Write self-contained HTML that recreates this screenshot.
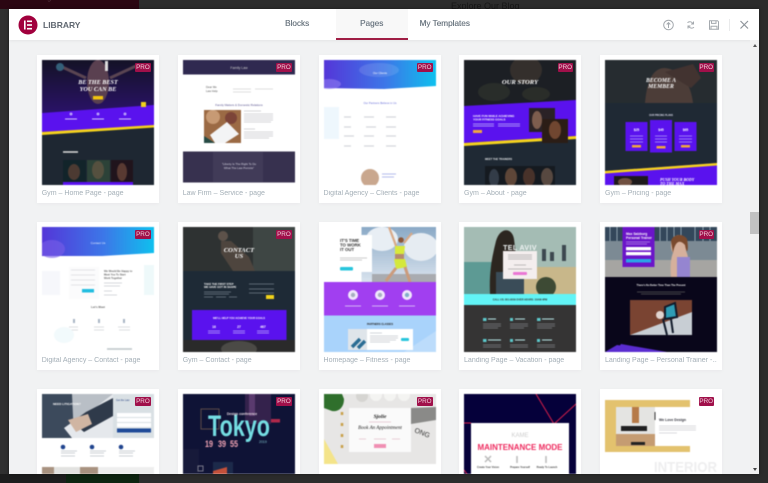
<!DOCTYPE html>
<html><head><meta charset="utf-8"><style>
html,body{margin:0;padding:0;width:768px;height:483px;overflow:hidden;background:#2c2c2c;font-family:"Liberation Sans",sans-serif}
.a{position:absolute}
#modal{position:absolute;left:8.5px;top:8.5px;width:750.5px;height:465.5px;background:#f1f2f3;overflow:hidden;box-shadow:0 0 4px rgba(0,0,0,.4)}
.card{position:absolute;width:122px;height:148px;background:#fff;box-shadow:0 1px 4px rgba(0,0,0,.04);overflow:hidden}
.card svg.t{position:absolute;left:5px;top:5px;width:112px;height:125px;filter:blur(.45px);display:block}
.r3{height:85.5px}
.card.r3 svg.t{height:80.5px}
.card .p{position:absolute;left:98.5px;top:8px;width:15.5px;height:9px;background:#a0104a;color:#f0cfdc;font-size:6.3px;line-height:9px;text-align:center;border-radius:1px;filter:blur(.25px)}
.card .l{position:absolute;left:5px;top:134px;font-size:7.05px;line-height:10px;color:#a4afb7;white-space:nowrap;width:112px;overflow:hidden;filter:blur(.2px)}
.tab{position:absolute;top:9px;font-size:8.2px;line-height:12px;color:#6d7882;text-shadow:.2px 0 0 #6d7882;white-space:nowrap;filter:blur(.2px)}
</style></head><body>
<div class="a" style="left:0;top:0;width:139px;height:9px;background:#2b0612;overflow:hidden"><div style="margin:-6px 0 0 8px;font-size:7px;line-height:10px;color:#5a3a44">Start Tracking</div></div>
<div class="a" style="left:0;top:474px;width:139px;height:9px;background:#1d1d1d"></div>
<div class="a" style="left:66px;top:474px;width:73px;height:9px;background:#0d2410"></div>
<div class="a" style="left:0;top:9px;width:8px;height:465px;background:#303030"></div>
<div class="a" style="left:451px;top:0;font-size:9px;line-height:12px;color:#171717">Explore Our Blog</div>
<div id="modal">
<div class="a" style="left:0;top:0;height:31.5px;background:#fff;box-shadow:0 1px 3px rgba(0,0,0,.06);width:100%"></div>
<svg class="a" style="left:9px;top:6.5px" width="20" height="20" viewBox="0 0 20 20"><circle cx="10" cy="10" r="9.5" fill="#a1003d"/><rect x="6" y="5.5" width="1.6" height="9" fill="#fff"/><rect x="9" y="5.5" width="5" height="1.6" fill="#fff"/><rect x="9" y="9.2" width="5" height="1.6" fill="#fff"/><rect x="9" y="12.9" width="5" height="1.6" fill="#fff"/></svg>
<div class="a" style="left:34.5px;top:10px;font-size:8.5px;line-height:12px;font-weight:bold;color:#5f6770">LIBRARY</div>
<div class="tab" style="left:276.5px">Blocks</div>
<div class="a" style="left:327px;top:0;width:72px;height:31.5px;background:#f8f8f8"></div>
<div class="a" style="left:327px;top:29.5px;width:72px;height:2px;background:#a01e45"></div>
<div class="tab" style="left:351.5px">Pages</div>
<div class="tab" style="left:411px">My Templates</div>
<svg class="a" style="left:650px;top:8px" width="92" height="18" viewBox="0 0 92 18" fill="none" stroke="#a4a9ae" stroke-width="1">
<circle cx="9.5" cy="8" r="4.8"/><path d="M9.5 11V6M7.7 7.5L9.5 5.6 11.3 7.5"/>
<path d="M28.5 5.6A3.4 3.4 0 0 1 34 7M35 10.2A3.4 3.4 0 0 1 29.5 9M34.5 4.5V7H32M29 11.5V9H31.5"/>
<path d="M50.5 3.7H58.5L59.5 4.7V12.2H50.5ZM52.5 3.7V6.4H57V3.7M52 12V9.2H58V12"/>
<path d="M70.5 2V14" stroke="#e9eaeb"/>
<path d="M81.5 4L89 11.5M89 4L81.5 11.5" stroke="#8f959b" stroke-width="1.2"/>
</svg>
<div class="a" style="left:741.5px;top:31.5px;width:9px;height:434px;background:#f1f1f1"></div>
<div class="a" style="left:741.5px;top:203px;width:9px;height:22px;background:#c1c1c1"></div>
<div class="a" style="left:744px;top:35px;width:0;height:0;border:2px solid transparent;border-bottom:3px solid #555;border-top:0"></div>
<div class="a" style="left:744px;top:459.5px;width:0;height:0;border:2px solid transparent;border-top:3px solid #444;border-bottom:0"></div>

<!-- ROW 1 -->
<div class="card" style="left:28.2px;top:46.5px"><svg class="t" viewBox="0 0 112 125">
<defs><linearGradient id="g1" x1="0" y1="0" x2="0" y2="1"><stop offset="0" stop-color="#141226"/><stop offset="1" stop-color="#2a1268"/></linearGradient></defs>
<rect width="112" height="125" fill="#1e2732"/><path d="M0 0H112V46L0 53Z" fill="url(#g1)"/>
<ellipse cx="56" cy="22" rx="11" ry="22" fill="#5a4050"/><path d="M18 6L44 18M94 6L68 18" stroke="#5a4552" stroke-width="3"/><circle cx="18" cy="7" r="4" fill="#34607a"/><rect x="63" y="1" width="3" height="10" fill="#ddd"/>
<text x="56" y="24" font-family="Liberation Serif" font-size="6.2" font-weight="bold" font-style="italic" fill="#fff" text-anchor="middle">BE THE BEST</text>
<text x="56" y="31" font-family="Liberation Serif" font-size="6.2" font-weight="bold" font-style="italic" fill="#fff" text-anchor="middle">YOU CAN BE</text>
<rect x="51" y="36" width="10" height="3.5" fill="#f1c40f"/>
<path d="M0 53L112 45V66L0 72Z" fill="#5a12ee"/><rect x="99" y="42" width="5" height="5" fill="#f1d21a"/>
<path d="M0 72L112 65V67.5L0 75Z" fill="#f4d21e"/>
<circle cx="29" cy="54" r="1.5" fill="#b9a0fa"/><circle cx="56" cy="54" r="1.5" fill="#b9a0fa"/><circle cx="83" cy="54" r="1.5" fill="#b9a0fa"/>
<path d="M23 59H35M50 59H62M77 59H89" stroke="#d3c5fb"/>
<path d="M21 92H36" stroke="#ddd" stroke-width="1.5"/>
<rect x="21" y="100" width="23" height="25" fill="#12242a"/><rect x="45" y="100" width="23" height="25" fill="#2c4238"/><rect x="69" y="100" width="22" height="25" fill="#20141c"/>
<ellipse cx="32" cy="112" rx="6" ry="8" fill="#4c3a32"/><ellipse cx="56" cy="110" rx="6" ry="9" fill="#55503f"/><ellipse cx="80" cy="112" rx="5" ry="9" fill="#593a32"/>
<rect x="21" y="122" width="70" height="3" fill="#5a12ee"/></svg><div class="p">PRO</div><div class="l">Gym – Home Page - page</div></div>

<div class="card" style="left:169.2px;top:46.5px"><svg class="t" viewBox="0 0 112 125">
<rect width="112" height="125" fill="#fff"/><rect width="112" height="14.5" fill="#2f2950"/>
<text x="56" y="9" font-size="3.4" fill="#ccc" text-anchor="middle">Family Law</text>
<text x="23" y="28" font-size="2.8" fill="#555">Dear Me</text><text x="23" y="32" font-size="2.8" fill="#555">Law Help</text>
<path d="M50 29H68M72 29H90M50 32H68" stroke="#ddd" stroke-width="1"/>
<text x="56" y="46" font-size="2.9" fill="#5a5590" text-anchor="middle">Family Matters &amp; Domestic Relations</text>
<rect x="21" y="50" width="37" height="33" fill="#9b6a44"/><circle cx="30" cy="57" r="7" fill="#c79a74"/><circle cx="48" cy="58" r="6" fill="#7c4438"/><path d="M27 75L44 62L56 74L42 83H32Z" fill="#f3f4f5"/><path d="M21 76L32 83H21Z" fill="#264a44"/>
<path d="M61 51H78M61 54H90M61 56H90M61 58H90M61 60H90M61 62H88M61 69H72M61 72H90M61 74H90M61 76H90M61 78H86" stroke="#d4d4d8" stroke-width=".9"/>
<rect y="91.5" width="112" height="31" fill="#37314f"/><rect x="30" y="92" width="50" height="30" fill="#413b58"/>
<text x="56" y="105" font-size="2.9" fill="#d8d6e4" text-anchor="middle">"Liberty Is The Right To Do</text><text x="56" y="109" font-size="2.9" fill="#d8d6e4" text-anchor="middle">What The Law Permits"</text></svg><div class="p">PRO</div><div class="l">Law Firm – Service - page</div></div>

<div class="card" style="left:310px;top:46.5px"><svg class="t" viewBox="0 0 112 125">
<defs><linearGradient id="g3" x1="0" y1="0" x2="1" y2="0"><stop offset="0" stop-color="#5436d8"/><stop offset=".55" stop-color="#3c77e8"/><stop offset="1" stop-color="#0fc0ee"/></linearGradient></defs>
<rect width="112" height="125" fill="#fff"/><path d="M0 0H112V26L60 29L0 28Z" fill="url(#g3)"/><ellipse cx="55" cy="10" rx="20" ry="7" fill="#fff" opacity=".12"/><ellipse cx="5" cy="24" rx="12" ry="5" fill="#8f7cf0" opacity=".6"/>
<text x="56" y="14" font-size="2.8" fill="#fff" text-anchor="middle">Our Clients</text>
<text x="56" y="44" font-size="2.8" fill="#6a70d8" text-anchor="middle">Our Partners Believe in Us</text>
<rect x="0" y="47" width="15" height="32" fill="#eef7fd"/><path d="M20 57H27M40 57H50M62 57H72M20 67H27M42 67H52M62 67H72M20 76H30M40 76H50M62 76H72M20 86H27M40 86H50M62 86H72" stroke="#d5d7db" stroke-width="1.2"/>
<circle cx="46" cy="118" r="9" fill="#c9a78e"/><path d="M58 114H72M58 117H70" stroke="#b4bbea"/></svg><div class="p">PRO</div><div class="l">Digital Agency – Clients - page</div></div>

<div class="card" style="left:450.5px;top:46.5px"><svg class="t" viewBox="0 0 112 125">
<rect width="112" height="125" fill="#1f2934"/><path d="M0 0H112V40L0 46Z" fill="#1c1f24"/><ellipse cx="62" cy="10" rx="16" ry="14" fill="#342f2c"/><ellipse cx="30" cy="32" rx="16" ry="9" fill="#292d2a"/><ellipse cx="72" cy="34" rx="14" ry="7" fill="#2a2d29"/>
<text x="56" y="24" font-family="Liberation Serif" font-size="6.6" font-weight="bold" font-style="italic" fill="#fff" text-anchor="middle">OUR STORY</text>
<path d="M0 46L112 40V76L0 83Z" fill="#5a12ee"/><path d="M0 83L112 76V79L0 86Z" fill="#f4d21e"/>
<text x="9" y="57" font-size="2.9" font-weight="bold" fill="#fff">HAVE FUN WHILE ACHIEVING</text><text x="9" y="60.5" font-size="2.9" font-weight="bold" fill="#fff">YOUR FITNESS GOALS</text>
<path d="M9 64H30M34 64H56M9 66H30M34 66H56" stroke="#a88cf8" stroke-width=".9"/><rect x="9" y="70" width="9" height="3" fill="#f0a740"/>
<rect x="65" y="48" width="26" height="24" fill="#2a2226"/><rect x="78" y="59" width="26" height="24" fill="#2b1d16"/><ellipse cx="73" cy="60" rx="5" ry="9" fill="#7d5d4e"/><ellipse cx="91" cy="70" rx="6" ry="9" fill="#704630"/>
<text x="21" y="100" font-size="2.6" font-weight="bold" fill="#e4e6e8">MEET THE TRAINERS</text>
<rect x="21" y="106" width="70" height="19" fill="#151a20"/><ellipse cx="30" cy="118" rx="5" ry="9" fill="#333c48"/><ellipse cx="47" cy="117" rx="6" ry="9" fill="#5e4638"/><ellipse cx="65" cy="117" rx="6" ry="9" fill="#48322a"/><ellipse cx="83" cy="117" rx="6" ry="9" fill="#574840"/></svg><div class="p">PRO</div><div class="l">Gym – About - page</div></div>

<div class="card" style="left:591.5px;top:46.5px"><svg class="t" viewBox="0 0 112 125">
<rect width="112" height="125" fill="#1f2934"/><rect width="112" height="43" fill="#262c30"/><path d="M40 43C42 20 48 8 60 8C78 10 86 26 88 43Z" fill="#4c3d38"/><path d="M60 12L88 4L96 18L86 28Z" fill="#423330"/>
<text x="56" y="22" font-family="Liberation Serif" font-size="5.8" font-weight="bold" font-style="italic" fill="#fff" text-anchor="middle">BECOME A</text><text x="56" y="28" font-family="Liberation Serif" font-size="5.8" font-weight="bold" font-style="italic" fill="#fff" text-anchor="middle">MEMBER</text>
<text x="56" y="56" font-size="2.3" font-weight="bold" fill="#dde" text-anchor="middle">OUR PRICING PLANS</text>
<rect x="20.5" y="62" width="22" height="29" fill="#5a12ee"/><rect x="45" y="60" width="22" height="32.5" fill="#5a12ee"/><rect x="69.5" y="62" width="22" height="29" fill="#5a12ee"/>
<text x="31.5" y="71" font-size="3.3" font-weight="bold" fill="#fff" text-anchor="middle">$25</text><text x="56" y="71" font-size="3.3" font-weight="bold" fill="#fff" text-anchor="middle">$45</text><text x="80.5" y="71" font-size="3.3" font-weight="bold" fill="#fff" text-anchor="middle">$65</text>
<path d="M25 76H38M25 79H38M25 82H38M50 76H62M50 79H62M50 82H62M74 76H87M74 79H87M74 82H87" stroke="#9d7cf7" stroke-width=".9"/>
<rect x="27" y="85" width="9" height="2.5" fill="#f0a740"/><rect x="51.5" y="86" width="9" height="2.5" fill="#f0a740"/><rect x="76" y="85" width="9" height="2.5" fill="#f0a740"/>
<path d="M0 111L112 103V125H0Z" fill="#5a12ee"/><path d="M0 111L112 103V105.5L0 113.5Z" fill="#f4d21e"/>
<rect x="9" y="116" width="34" height="9" fill="#1e1a1c"/><ellipse cx="20" cy="122" rx="7" ry="4" fill="#705040"/>
<text x="55" y="121" font-family="Liberation Serif" font-size="4" font-weight="bold" font-style="italic" fill="#fff">PUSH YOUR BODY</text><text x="55" y="125" font-family="Liberation Serif" font-size="4" font-weight="bold" font-style="italic" fill="#fff">TO THE MAX</text></svg><div class="p">PRO</div><div class="l">Gym – Pricing - page</div></div>

<!-- ROW 2 -->
<div class="card" style="left:28.2px;top:213.5px;height:147.5px"><svg class="t" viewBox="0 0 112 125">
<rect width="112" height="125" fill="#fff"/><path d="M0 0H112V26L60 29L0 29Z" fill="url(#g3)"/><ellipse cx="10" cy="22" rx="13" ry="9" fill="#7a5fe8" opacity=".6"/>
<text x="56" y="17" font-size="3" fill="#e8f0ff" text-anchor="middle">Contact Us</text>
<rect x="27" y="40" width="30" height="32" fill="#fbfbfc"/><path d="M29 43H53M29 48H53M29 53H53M29 58H53" stroke="#e3e4e8"/><rect x="40" y="62" width="12" height="3.5" fill="#22bde0"/>
<text x="62" y="45" font-size="2.6" font-weight="bold" fill="#666">We Would Be Happy to</text><text x="62" y="48.5" font-size="2.6" font-weight="bold" fill="#666">Meet You To Start</text><text x="62" y="52" font-size="2.6" font-weight="bold" fill="#666">Work Together</text>
<path d="M62 56H80M62 59H78M62 64H70M62 68H75" stroke="#d6d8dc" stroke-width=".9"/><rect x="102" y="38" width="10" height="30" fill="#eef9fa"/><rect x="0" y="44" width="18" height="24" fill="#f6f7fb"/>
<text x="56" y="81" font-size="2.9" font-weight="bold" fill="#666" text-anchor="middle">Let's Meet</text>
<path d="M32 92V96M57 92V96M82 92V96" stroke="#a8b4c4" stroke-width="2"/><path d="M27 100H36M52 100H62M76 100H88M28 103H36M52 103H62M77 103H88" stroke="#dcdde0" stroke-width=".9"/>
<ellipse cx="22" cy="108" rx="10" ry="8" fill="#f2fafc"/><path d="M65 122H90" stroke="#bcc4c8" stroke-width="1.5"/></svg><div class="p">PRO</div><div class="l">Digital Agency – Contact - page</div></div>

<div class="card" style="left:169.2px;top:213.5px;height:147.5px"><svg class="t" viewBox="0 0 112 125">
<rect width="112" height="125" fill="#1e2a36"/><rect width="112" height="44" fill="#2e3232"/><rect x="70" y="0" width="42" height="44" fill="#3e4644"/><circle cx="40" cy="9" r="5" fill="#5d524a"/><path d="M38 14L48 14L66 30L72 44H50L38 26Z" fill="#4e453e"/>
<text x="56" y="25" font-family="Liberation Serif" font-size="6.6" font-weight="bold" font-style="italic" fill="#fff" text-anchor="middle">CONTACT</text><text x="56" y="31" font-family="Liberation Serif" font-size="6.6" font-weight="bold" font-style="italic" fill="#fff" text-anchor="middle">US</text>
<text x="21" y="58" font-size="2.7" font-weight="bold" fill="#fff">TAKE THE FIRST STEP</text><text x="21" y="61" font-size="2.7" font-weight="bold" fill="#fff">WE HAVE GOT IN SHAPE</text>
<path d="M21 65H48M21 67H46M21 70H30M33 70H43M46 70H54M66 57H91M66 62H91M66 66H91" stroke="#5a6672" stroke-width=".9"/><rect x="83" y="68" width="8" height="4" fill="#f1d21a"/>
<rect y="113" width="112" height="12" fill="#2a2a2a"/><ellipse cx="56" cy="122" rx="18" ry="8" fill="#4b4a46"/><rect x="9" y="83" width="94.5" height="30" fill="#5a12ee"/>
<text x="56" y="92" font-size="2.6" font-weight="bold" fill="#fff" text-anchor="middle">WE'LL HELP YOU ACHIEVE YOUR GOALS</text>
<text x="31" y="101" font-size="3.4" font-weight="bold" fill="#fff" text-anchor="middle">16</text><text x="56" y="101" font-size="3.4" font-weight="bold" fill="#fff" text-anchor="middle">27</text><text x="80" y="101" font-size="3.4" font-weight="bold" fill="#fff" text-anchor="middle">467</text>
<path d="M25 104H37M50 104H62M74 104H86M25 106H37M50 106H62M74 106H86" stroke="#bba6fb" stroke-width=".8"/></svg><div class="p">PRO</div><div class="l">Gym – Contact - page</div></div>

<div class="card" style="left:310px;top:213.5px;height:147.5px"><svg class="t" viewBox="0 0 112 125">
<defs><linearGradient id="sky" x1="0" y1="0" x2="0" y2="1"><stop offset="0" stop-color="#8aa9c6"/><stop offset="1" stop-color="#d9e3ee"/></linearGradient></defs>
<rect width="112" height="125" fill="#fff"/><rect x="37.5" width="74.5" height="55" fill="url(#sky)"/><ellipse cx="58" cy="12" rx="16" ry="12" fill="#e8eef4"/><ellipse cx="97" cy="20" rx="17" ry="14" fill="#e6ecf2"/><rect x="48" y="47" width="64" height="8" fill="#a9abb0"/>
<path d="M65 0L71 16L73 22M88 6L80 16" stroke="#d8a987" stroke-width="2.2" fill="none"/><circle cx="77" cy="13" r="2.8" fill="#8c5638"/><path d="M71 19L81 19L80 27L71 27Z" fill="#d8e93c"/><path d="M70 32L81 32L83 40L72 42Z" fill="#d4e83c"/><path d="M71 27H80V32H71Z" fill="#b58a70"/><path d="M72 41L62 54M81 40L86 55" stroke="#cb9b7c" stroke-width="3" fill="none"/>
<rect x="16" y="8" width="32" height="37" fill="#fff"/><rect x="37.5" y="0" width="0" height="0"/><rect x="0" y="0" width="37.5" height="55" fill="#fff"/>
<text x="16" y="15" font-size="4.3" font-weight="bold" fill="#333">IT'S TIME</text><text x="16" y="19.5" font-size="4.3" font-weight="bold" fill="#333">TO WORK</text><text x="16" y="24" font-size="4.3" font-weight="bold" fill="#333">IT OUT</text>
<path d="M16 31H43M16 33H38" stroke="#ccc" stroke-width=".9"/><rect x="16" y="40" width="13" height="3.5" rx="1" fill="#27c5dc"/>
<rect y="55" width="112" height="33.5" fill="#a13ff0"/>
<circle cx="29" cy="68" r="5" fill="#f1e8fd"/><circle cx="56" cy="68" r="5" fill="#f1e8fd"/><circle cx="83" cy="68" r="5" fill="#f1e8fd"/><circle cx="29" cy="68" r="2.2" fill="#a8b0c0"/><circle cx="56" cy="68" r="2.2" fill="#a8b0c0"/><circle cx="83" cy="68" r="2.2" fill="#7fb0c8"/>
<path d="M21 79H37M48 79H64M75 79H91" stroke="#d4b2f7"/>
<rect y="88.5" width="112" height="36.5" fill="#a9d3fb"/><path d="M112 104V125H80Z" fill="#bcdcfb"/>
<text x="56" y="98" font-size="2.5" font-weight="bold" fill="#222" text-anchor="middle">PARTNERS CLASSES</text>
<rect x="24" y="102" width="65" height="21" fill="#fff"/><rect x="24" y="102" width="19" height="21" fill="#dfe5ea"/><path d="M28 120L36 112M34 121L41 114" stroke="#2a6d94" stroke-width="3.5"/>
<path d="M46 106H58M46 109H74M46 111H74M46 113H72M46 115H66" stroke="#c5c9ce" stroke-width=".8"/><rect x="77" y="111" width="8" height="3" rx="1" fill="#27c5dc"/></svg><div class="l">Homepage – Fitness - page</div></div>

<div class="card" style="left:450.5px;top:213.5px;height:147.5px"><svg class="t" viewBox="0 0 112 125">
<rect width="112" height="67" fill="#a4bcb4"/><rect y="35" width="40" height="32" fill="#5d9a94"/><rect x="60" y="40" width="52" height="27" fill="#c8b78a"/><path d="M80 22V34M100 18V34M88 25V34" stroke="#3d4850" stroke-width="4"/>
<path d="M26 67C25 45 28 30 32 14C36 0 48 0 50 12L54 45L58 67Z" fill="#2c2620"/><rect x="32" y="45" width="28" height="22" fill="#3a4c58"/><ellipse cx="82" cy="60" rx="10" ry="10" fill="#3d4a34"/>
<text x="56" y="23" font-size="7" font-weight="bold" fill="#f0f4f4" text-anchor="middle" letter-spacing=".4">TEL AVIV</text>
<rect x="39" y="24" width="34" height="28" fill="#f4eeee"/><path d="M44 28H68M44 30H68M44 32H68M50 38H62M44 42H68" stroke="#aaa" stroke-width=".8"/><rect x="49" y="45" width="14" height="3" rx="1" fill="#ea76d4"/>
<rect y="67" width="112" height="11" fill="#62f4f6"/><text x="56" y="73.5" font-size="2.5" font-weight="bold" fill="#333" text-anchor="middle">CALL US: 801-9009 OVER HOURS: 10AM-4PM</text>
<rect y="78" width="112" height="47" fill="#353434"/>
<g fill="#5cc9cc"><rect x="19" y="91" width="3.5" height="3"/><rect x="46" y="91" width="3" height="3"/><rect x="73" y="91" width="3.5" height="3"/><rect x="19" y="112" width="3.5" height="3"/><rect x="46" y="112" width="3" height="3"/><rect x="73" y="112" width="3" height="3"/></g>
<path d="M24 92H32M51 92H61M78 92H90M24 113H37M51 113H61M78 113H88" stroke="#b8e6e8"/>
<path d="M19 97H37M46 97H64M73 97H91M19 99H37M46 99H64M73 99H91M19 101H34M46 101H60M73 101H88M19 118H37M46 118H64M73 118H91M19 120H37M46 120H64M73 120H91" stroke="#7e8082" stroke-width=".8"/></svg><div class="l">Landing Page – Vacation - page</div></div>

<div class="card" style="left:591.5px;top:213.5px;height:147.5px"><svg class="t" viewBox="0 0 112 125">
<rect width="112" height="50" fill="#5e7078"/><rect width="112" height="14" fill="#33475a"/><path d="M5 0V14M12 0V14M55 0V14M62 0V14M69 0V14M76 0V14M90 0V14M98 0V14M105 0V14" stroke="#8da0ad"/><rect y="33" width="112" height="17" fill="#a6a5a2"/><rect y="14" width="112" height="19" fill="#7c8a94"/>
<path d="M66 50C65 40 66 30 68 26C64 20 66 9 73 8C81 8 84 16 81 24C84 30 85 42 84 50Z" fill="#d6b09c"/><path d="M66 14C68 7 78 6 82 12C84 22 82 30 80 18C75 12 70 14 68 26Z" fill="#7a4a2e"/><path d="M72 30H85V50H72Z" fill="#9585d0"/>
<rect x="17.5" width="32" height="40" fill="#6b14c9"/>
<text x="21" y="8" font-size="3.3" font-weight="bold" fill="#fff">Max Salzburg</text><text x="21" y="12" font-size="3.3" font-weight="bold" fill="#fff">Personal Trainer</text>
<path d="M21 15H45M21 17H42" stroke="#b48ae8" stroke-width=".8"/><rect x="21" y="20" width="25" height="3.3" fill="#fff"/><rect x="21" y="25" width="25" height="3.3" fill="#fff"/><rect x="21" y="32" width="25" height="3.5" fill="#2ba5e6"/>
<rect y="50" width="112" height="75" fill="#09061a"/>
<text x="56" y="59" font-size="2.5" font-weight="bold" fill="#f0f0f0" text-anchor="middle">There's No Better Time Than The Present</text>
<path d="M32 65H80M36 67H76" stroke="#555" stroke-width=".8"/>
<rect x="25" y="73" width="62" height="35" fill="#7a4432"/><path d="M25 108L87 85V108Z" fill="#c8ced4"/><path d="M60 80L70 76L72 90L60 92ZM58 92L62 108M66 92L68 106" stroke="#111a2a" stroke-width="2" fill="#2f9cb4"/><circle cx="55" cy="88" r="4" fill="#e0d4d0"/>
<path d="M0 125L12 118L60 125Z" fill="#5a2cd0"/><path d="M10 125L16 117L62 125Z" fill="#5a2cd0"/></svg><div class="p">PRO</div><div class="l">Landing Page – Personal Trainer -...</div></div>

<!-- ROW 3 -->
<div class="card r3" style="left:28.2px;top:380px"><svg class="t" viewBox="0 0 112 80.5">
<rect width="112" height="80.5" fill="#fff"/><rect width="71" height="44" fill="#b9bfc6"/><path d="M0 0H30L32 44H0Z" fill="#3c4a5c"/><path d="M71 0L50 16L36 24L22 34L30 44H71Z" fill="#e5e8ec"/><path d="M71 4L44 18L30 28L42 38L71 22Z" fill="#2f3a4a"/><path d="M26 26L46 20L50 30L34 38Z" fill="#d0b5a2"/>
<text x="11" y="11" font-size="3" font-weight="bold" fill="#fff">NEED LITIGATION?</text>
<rect x="71" width="41" height="44" fill="#d9e0e4"/><text x="74" y="7" font-size="2.5" fill="#223f80">Get the Law</text><rect x="75" y="19" width="34" height="4" fill="#fff"/><rect x="75" y="24" width="34" height="4" fill="#fff"/><rect x="75" y="29" width="34" height="4" fill="#fff"/><rect x="75" y="34.5" width="34" height="4" fill="#1f4a98"/>
<circle cx="21" cy="53" r="2.3" fill="#20448e"/><circle cx="50" cy="53" r="2.3" fill="#20448e"/><circle cx="79" cy="53" r="2.3" fill="#20448e"/>
<path d="M19 57H35M48 57H64M77 57H93M19 59H33M48 59H62M77 59H91M19 62H33M48 62H62M77 62H91" stroke="#ccd0d6" stroke-width=".9"/>
<rect y="73" width="112" height="7.5" fill="#eee"/><rect y="73" width="56" height="7.5" fill="#a89280"/><rect x="12" y="73" width="26" height="7.5" fill="#e2e2e0"/></svg><div class="p">PRO</div></div>

<div class="card r3" style="left:169.2px;top:380px"><svg class="t" viewBox="0 0 112 80.5">
<rect width="112" height="80.5" fill="#0f1336"/><rect x="62" width="26" height="30" fill="#34224c"/><rect x="66" width="6" height="22" fill="#5a3a6e"/><rect y="55" width="16" height="26" fill="#171a3a"/><rect x="18" y="15" width="18" height="20" fill="none" stroke="#5a4a48"/><rect x="30" y="68" width="20" height="12" fill="#1c2a4a"/><path d="M30 77L44 73V80.5H30Z" fill="#c4503a"/><rect x="88" y="25" width="9" height="3.5" fill="#b0284a"/><rect x="15" y="72" width="5" height="5" fill="none" stroke="#778"/>
<text x="56" y="42" font-size="30" font-weight="bold" fill="#74dde2" text-anchor="middle" textLength="62" lengthAdjust="spacingAndGlyphs" font-family="Liberation Sans Narrow,Liberation Sans">Tokyo</text>
<text x="59" y="21" font-size="3.4" font-weight="bold" fill="#e8dbe4" text-anchor="middle">Design conference</text>
<text x="26" y="53" font-size="9" font-weight="bold" fill="#f0a3b4" text-anchor="middle" textLength="8" lengthAdjust="spacingAndGlyphs">19</text><text x="39" y="53" font-size="9" font-weight="bold" fill="#f0a3b4" text-anchor="middle" textLength="8" lengthAdjust="spacingAndGlyphs">39</text><text x="51" y="53" font-size="9" font-weight="bold" fill="#f0a3b4" text-anchor="middle" textLength="8" lengthAdjust="spacingAndGlyphs">55</text><text x="76" y="49" font-size="3.5" fill="#7fc2cc">2019</text></svg><div class="p">PRO</div></div>

<div class="card r3" style="left:310px;top:380px"><svg class="t" viewBox="0 0 112 80.5">
<rect width="112" height="80.5" fill="#fff"/><rect width="112" height="70" fill="#e7e6e5"/><path d="M0 0H18L20 5C20 14 14 18 8 17L0 14Z" fill="#2f6f2c"/><circle cx="38" cy="2" r="6" fill="#d6d5d2"/><circle cx="52" cy="1" r="6" fill="#f4f4f2"/><circle cx="66" cy="1" r="6" fill="#f4f4f2"/><circle cx="80" cy="1" r="6" fill="#f4f4f2"/><path d="M112 13L87 14L87 30L112 26Z" fill="#8a8a88"/><path d="M0 45L14 70H0Z" fill="#f4e48a"/><path d="M18 18V62" stroke="#c9a04a" stroke-width="2.5" stroke-dasharray="3 8"/>
<rect x="25" y="14" width="62" height="44" fill="#fafafa"/>
<text x="56" y="24" font-size="5.5" font-family="Liberation Serif" font-style="italic" font-weight="bold" fill="#222" text-anchor="middle">Sjolie</text>
<text x="56" y="35" font-size="5" font-family="Liberation Serif" font-style="italic" fill="#222" text-anchor="middle">Book An Appointment</text>
<path d="M45 28H67M35 45H42M50 45H62M68 45H76" stroke="#e4c0cc" stroke-width=".8"/><rect x="50" y="50" width="12" height="4" fill="#f08fb3"/>
<text x="90" y="38" font-size="7" fill="#333" transform="rotate(22 90 38)">ONG</text></svg><div class="p">PRO</div></div>

<div class="card r3" style="left:450.5px;top:380px"><svg class="t" viewBox="0 0 112 80.5">
<rect width="112" height="80.5" fill="#05003a"/><path d="M72 0L90 30M112 10L90 30M0 29L7 29M0 76L3 80" stroke="#d81e4a" stroke-width="1"/>
<rect x="7" y="29" width="98" height="51.5" fill="#fff"/><text x="56" y="43" font-size="6" fill="#ccc" text-anchor="middle">KAME</text>
<text x="56" y="56" font-size="8" font-weight="bold" fill="#ee2a5e" text-anchor="middle" textLength="85" lengthAdjust="spacingAndGlyphs">MAINTENANCE MODE</text>
<path d="M21 62L27 68M27 62L21 68M53 62V69M82 62V69" stroke="#bbb" stroke-width="1.5"/>
<text x="24" y="74" font-size="2.5" font-weight="bold" fill="#444" text-anchor="middle">Create Your Vision</text><text x="56" y="74" font-size="2.5" font-weight="bold" fill="#444" text-anchor="middle">Prepare Yourself</text><text x="83" y="74" font-size="2.5" font-weight="bold" fill="#444" text-anchor="middle">Ready To Launch</text></svg></div>

<div class="card r3" style="left:591.5px;top:380px"><svg class="t" viewBox="0 0 112 80.5">
<rect width="112" height="80.5" fill="#fff"/><rect y="6" width="85" height="52" fill="#e3c26e"/><rect x="11" y="13" width="39" height="39" fill="#e4e4e2"/><rect x="27" y="13" width="7" height="16" fill="#b67a48"/><path d="M11 40H50V52H11Z" fill="#c59c72"/><rect x="16" y="32" width="26" height="5" fill="#1f1f20"/><rect x="26" y="48" width="14" height="3" fill="#222"/>
<rect x="50" y="13" width="47" height="39" fill="#fff"/><path d="M50 18V26" stroke="#333" stroke-width="1"/>
<text x="54" y="27" font-size="3.5" font-weight="bold" fill="#30313a">We Love Design</text><path d="M54 32H91M54 34H91M54 36H91M54 39H72" stroke="#d0d0d4" stroke-width=".8"/>
<text x="49" y="78" font-size="15" font-weight="bold" fill="#eeeeef" textLength="63" lengthAdjust="spacingAndGlyphs">INTERIOR</text></svg><div class="p">PRO</div></div>
</div>
</body></html>
